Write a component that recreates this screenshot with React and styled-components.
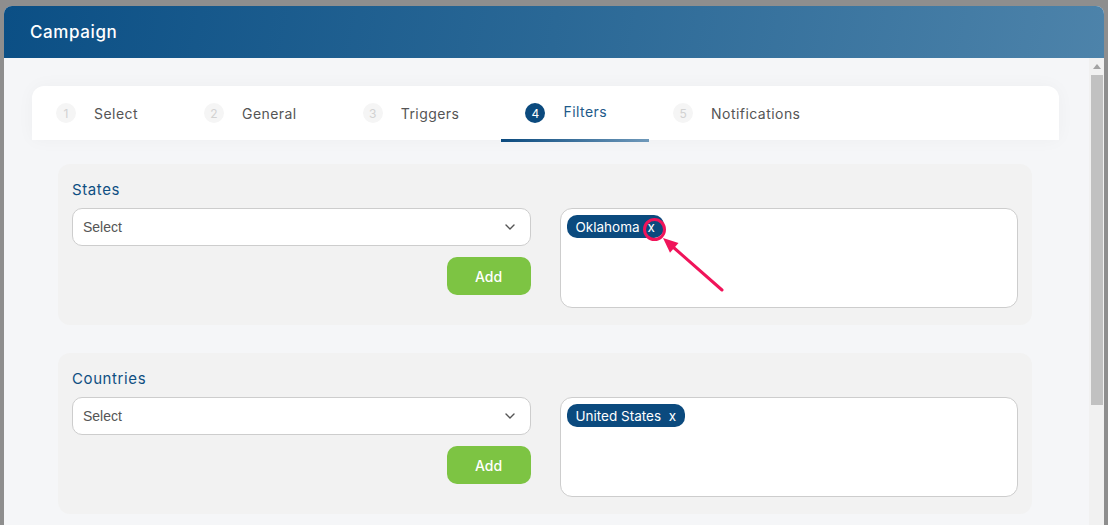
import React from "react";
import styled, { createGlobalStyle } from "styled-components";

const GlobalStyle = createGlobalStyle`
  * { box-sizing: border-box; }
  body {
    margin: 0;
    background: #8e8e8e;
    font-family: Inter, "Open Sans", sans-serif;
    overflow: hidden;
  }
`;

const STEPS = [
  { num: 1, label: "Select" },
  { num: 2, label: "General" },
  { num: 3, label: "Triggers" },
  { num: 4, label: "Filters", active: true },
  { num: 5, label: "Notifications" },
];

const FILTERS = [
  { title: "States", tag: "Oklahoma", marked: true },
  { title: "Countries", tag: "United States" },
];

const ChevronDown = () => (
  <svg width="12" height="12" viewBox="0 0 12 12" fill="none">
    <path d="M2 4l4 4 4-4" stroke="#555" strokeWidth="1.4" strokeLinecap="round" strokeLinejoin="round" />
  </svg>
);

const Campaign = () => {
  return (
    <Backdrop>
      <GlobalStyle />
      <Modal>
        <Header>
          <Title>Campaign</Title>
        </Header>
        <Body>
          <Content>
            <TabCard>
              {STEPS.map((step) => (
                <Tab key={step.num} $active={step.active}>
                  <StepNum $active={step.active}>{step.num}</StepNum>
                  <StepLabel $active={step.active}>{step.label}</StepLabel>
                </Tab>
              ))}
            </TabCard>
            <Sections>
              {FILTERS.map((f) => (
                <Section key={f.title}>
                  <SectionTitle>{f.title}</SectionTitle>
                  <Row>
                    <LeftCol>
                      <SelectBox>
                        <span>Select</span>
                        <ChevronDown />
                      </SelectBox>
                      <AddButton>Add</AddButton>
                    </LeftCol>
                    <TagBox>
                      <Chip>
                        {f.tag}{" "}
                        <Remove $marked={f.marked}>
                          x
                          {f.marked && (
                            <Arrow width="90" height="80" viewBox="0 0 90 80">
                              <line x1="71" y1="63" x2="22" y2="20" stroke="#f0145a" strokeWidth="3" strokeLinecap="round" />
                              <polygon points="12,11 27.5,16 19,25.8" fill="#f0145a" />
                            </Arrow>
                          )}
                        </Remove>
                      </Chip>
                    </TagBox>
                  </Row>
                </Section>
              ))}
            </Sections>
          </Content>
          <Scrollbar>
            <ScrollArrow />
            <ScrollThumb />
          </Scrollbar>
        </Body>
      </Modal>
    </Backdrop>
  );
};

const Backdrop = styled.div`
  height: 525px;
  padding: 6px 4px 0 4px;
`;

const Modal = styled.div`
  height: 519px;
  display: flex;
  flex-direction: column;
  border-radius: 8px 8px 0 0;
  overflow: hidden;
  background: #f5f6f8;
`;

const Header = styled.div`
  height: 52px;
  flex-shrink: 0;
  display: flex;
  align-items: center;
  padding-left: 26px;
  background: linear-gradient(100deg, #0b4f85 0%, #2a6896 50%, #4d83aa 100%);
`;

const Title = styled.h1`
  margin: 0;
  color: #fff;
  font-size: 17px;
  font-weight: 500;
  letter-spacing: 0.6px;
`;

const Body = styled.div`
  flex: 1;
  display: flex;
  min-height: 0;
`;

const Content = styled.div`
  flex: 1;
  overflow: hidden;
  padding: 28px 30px 0 28px;
`;

const TabCard = styled.div`
  height: 54px;
  display: flex;
  background: #fff;
  border-radius: 12px 12px 0 0;
  box-shadow: 0 0 18px rgba(0, 0, 0, 0.035);
`;

const Tab = styled.div`
  position: relative;
  display: flex;
  align-items: center;
  gap: 18px;
  padding: 0 42px 0 24px;

  &::after {
    content: "";
    display: ${(p) => (p.$active ? "block" : "none")};
    position: absolute;
    left: 0;
    right: 0;
    bottom: -2px;
    height: 3px;
    background: linear-gradient(90deg, #0b4a7e, #6f99ba);
  }
`;

const StepNum = styled.span`
  width: 20px;
  height: 20px;
  border-radius: 50%;
  display: flex;
  align-items: center;
  justify-content: center;
  font-size: 12px;
  background: ${(p) => (p.$active ? "#0b4a7e" : "#f5f5f5")};
  color: ${(p) => (p.$active ? "#fff" : "#d2d2d2")};
`;

const StepLabel = styled.span`
  font-size: 14px;
  letter-spacing: 0.45px;
  color: ${(p) => (p.$active ? "#1d5a8a" : "#555")};
  margin-bottom: ${(p) => (p.$active ? "3px" : "0")};
`;

const Sections = styled.div`
  padding: 24px 27px 0 26px;
  display: flex;
  flex-direction: column;
  gap: 28px;
`;

const Section = styled.div`
  background: #f2f2f2;
  border-radius: 12px;
  padding: 16px 14px 17px;
`;

const SectionTitle = styled.div`
  color: #0e4f82;
  font-size: 15px;
  letter-spacing: 0.6px;
  line-height: 20px;
  margin-bottom: 8px;
`;

const Row = styled.div`
  display: grid;
  grid-template-columns: 1fr 1fr;
  gap: 29px;
`;

const LeftCol = styled.div`
  display: flex;
  flex-direction: column;
  align-items: flex-end;
  gap: 11px;
`;

const SelectBox = styled.div`
  width: 100%;
  height: 38px;
  display: flex;
  align-items: center;
  justify-content: space-between;
  padding: 0 14px 0 10px;
  background: #fff;
  border: 1px solid #cdcdcd;
  border-radius: 10px;
  font-family: "Liberation Sans", Arial, sans-serif;
  font-size: 14px;
  color: #555;
`;

const AddButton = styled.button`
  width: 84px;
  height: 38px;
  border: none;
  border-radius: 10px;
  background: #7dc443;
  color: #fff;
  font-family: Inter, "Open Sans", sans-serif;
  font-size: 14px;
  font-weight: 500;
  cursor: pointer;
`;

const TagBox = styled.div`
  height: 100px;
  background: #fff;
  border: 1px solid #cdcdcd;
  border-radius: 12px;
  padding: 6px;
  display: flex;
  align-items: flex-start;
`;

const Chip = styled.span`
  height: 23px;
  display: inline-flex;
  align-items: center;
  gap: 4px;
  padding: 0 9px;
  background: #0b4a7e;
  border-radius: 10px;
  color: #fff;
  font-size: 13.5px;
  white-space: pre;
`;

const Remove = styled.span`
  position: relative;
  display: inline-block;

  &::after {
    content: "";
    display: ${(p) => (p.$marked ? "block" : "none")};
    position: absolute;
    left: 50%;
    top: 50%;
    width: 17px;
    height: 17px;
    margin: -8.5px 0 0 -8.5px;
    border: 3px solid #f0145a;
    border-radius: 50%;
  }
`;

const Arrow = styled.svg`
  position: absolute;
  left: 50%;
  top: 50%;
  overflow: visible;
  pointer-events: none;
`;

const Scrollbar = styled.div`
  width: 15px;
  flex-shrink: 0;
  background: #f1f1f1;
  display: flex;
  flex-direction: column;
  align-items: center;
`;

const ScrollArrow = styled.div`
  margin-top: 6px;
  width: 0;
  height: 0;
  border-left: 4px solid transparent;
  border-right: 4px solid transparent;
  border-bottom: 5px solid #a3a3a3;
`;

const ScrollThumb = styled.div`
  margin-top: 6px;
  width: 12px;
  height: 330px;
  background: #c1c1c1;
`;

export default Campaign;
